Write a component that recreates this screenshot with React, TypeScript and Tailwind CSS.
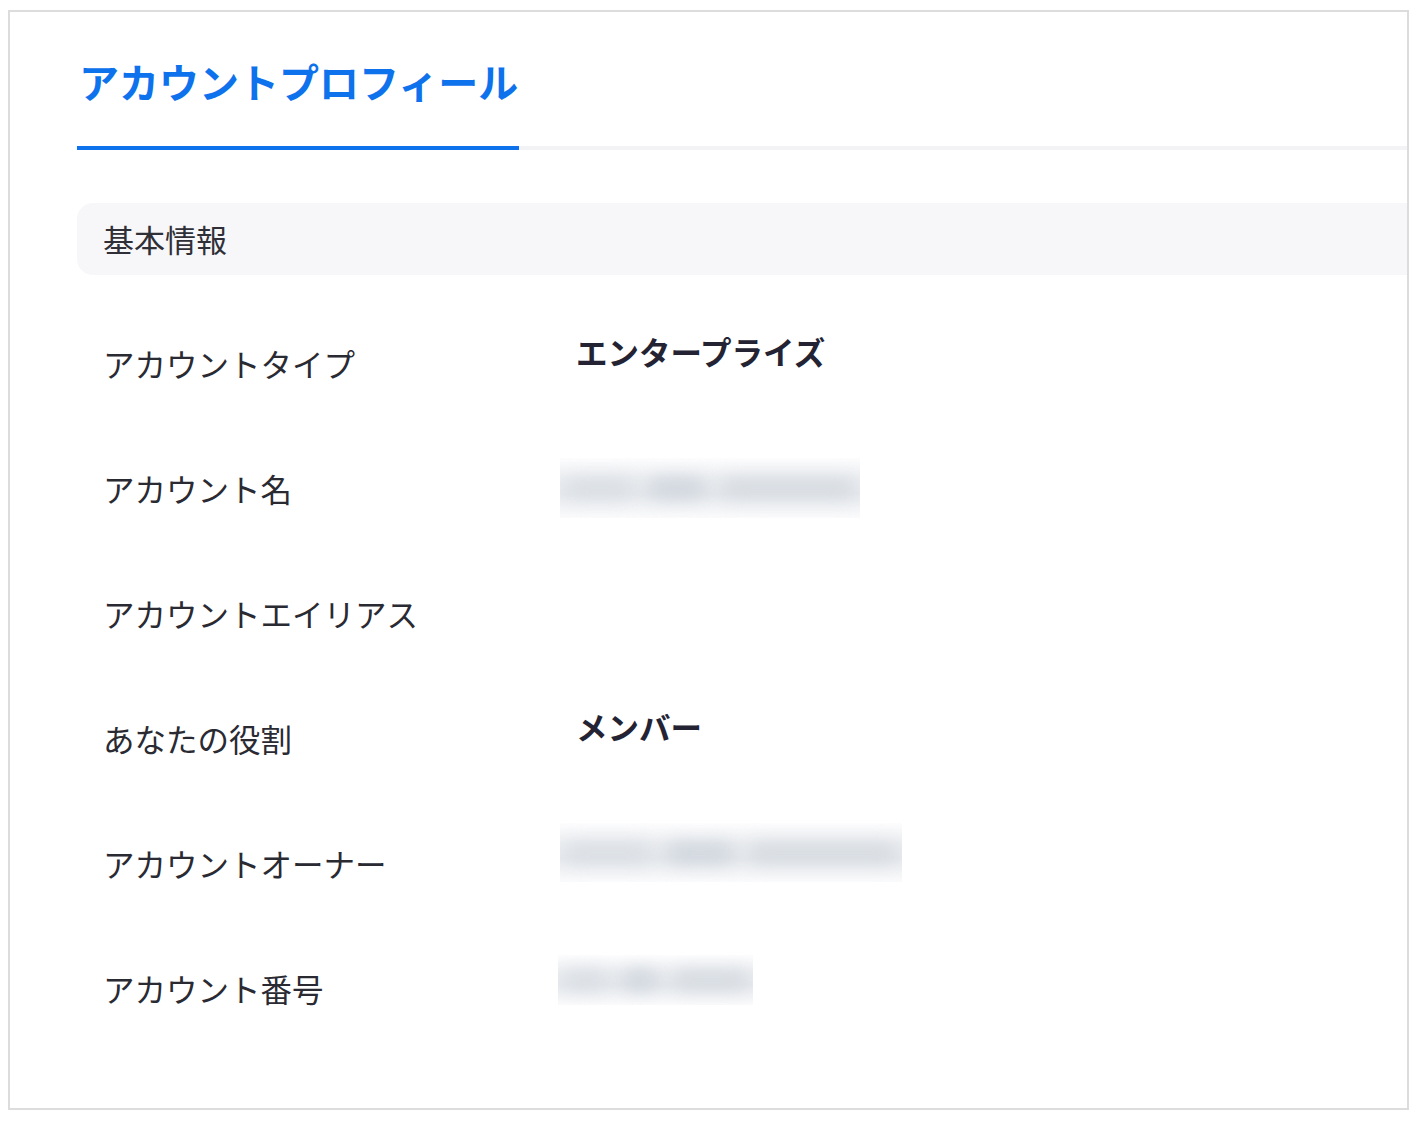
import React from "react"

const font = "font-['Noto_Sans_CJK_JP','Noto_Sans',sans-serif]"

const blurBox = "flex items-center gap-[14px] overflow-hidden bg-[linear-gradient(to_bottom,#fdfdfe,#eceef1_35%,#e7eaee_60%,#fbfbfc)] px-[4px]"
const blob = "h-[18px] rounded-full blur-[9px]"

function Blurred({ size }: { size: "md" | "lg" | "sm" }) {
  if (size === "lg") {
    return (
      <div className={`${blurBox} h-[59px] w-[342px]`}>
        <div className={`${blob} w-[88px] bg-[#d8dde3]`} />
        <div className={`${blob} w-[68px] bg-[#ccd3db]`} />
        <div className={`${blob} flex-1 bg-[#d4d9df]`} />
      </div>
    )
  }
  if (size === "sm") {
    return (
      <div className={`${blurBox} h-[50px] w-[195px]`}>
        <div className={`${blob} w-[46px] bg-[#d8dde3]`} />
        <div className={`${blob} w-[36px] bg-[#ccd3db]`} />
        <div className={`${blob} flex-1 bg-[#d4d9df]`} />
      </div>
    )
  }
  return (
    <div className={`${blurBox} h-[60px] w-[300px]`}>
      <div className={`${blob} w-[70px] bg-[#d8dde3]`} />
      <div className={`${blob} w-[58px] bg-[#ccd3db]`} />
      <div className={`${blob} flex-1 bg-[#d4d9df]`} />
    </div>
  )
}

function Row({ label, children }: { label: string; children?: React.ReactNode }) {
  return (
    <div className="flex h-[125px] items-center pl-[26px]">
      <div className="w-[457px] text-[31.5px] leading-[40px] text-[#2a2a33]">{label}</div>
      <div className="flex items-center">{children}</div>
    </div>
  )
}

function Strong({ text }: { text: string }) {
  return <div className="mb-[24px] pl-[16px] text-[31.5px] font-bold leading-[40px] text-[#232333]">{text}</div>
}

export default function App() {
  return (
    <div className={`${font} min-h-[1124px] bg-white pl-[8px] pt-[10px]`}>
      <div className="h-[1100px] w-[1401px] border-2 border-[#dcdcdc] pl-[67px]">
        {/* tab bar */}
        <div className="flex border-b-4 border-[#f3f3f5]">
          <div className="-mb-1 border-b-4 border-[#0e72ed] pb-[40px] pl-[2px] pr-[1px] pt-[44px]">
            <h1 className="text-[40px] font-bold leading-[50px] text-[#0e72ed]">アカウントプロフィール</h1>
          </div>
        </div>

        {/* section header */}
        <div className="mt-[53px] flex h-[72px] items-center rounded-l-[16px] bg-[#f7f7f9] pl-[26px]">
          <span className="text-[31px] leading-[40px] text-[#2f2f37]">基本情報</span>
        </div>

        <div className="mt-[25px]">
          <Row label="アカウントタイプ">
            <Strong text="エンタープライズ" />
          </Row>
          <Row label="アカウント名">
            <Blurred size="md" />
          </Row>
          <Row label="アカウントエイリアス" />
          <Row label="あなたの役割">
            <Strong text="メンバー" />
          </Row>
          <Row label="アカウントオーナー">
            <div className="mb-[20px]">
              <Blurred size="lg" />
            </div>
          </Row>
          <Row label="アカウント番号">
            <div className="mb-[16px] -ml-[2px]">
              <Blurred size="sm" />
            </div>
          </Row>
        </div>
      </div>
    </div>
  )
}
